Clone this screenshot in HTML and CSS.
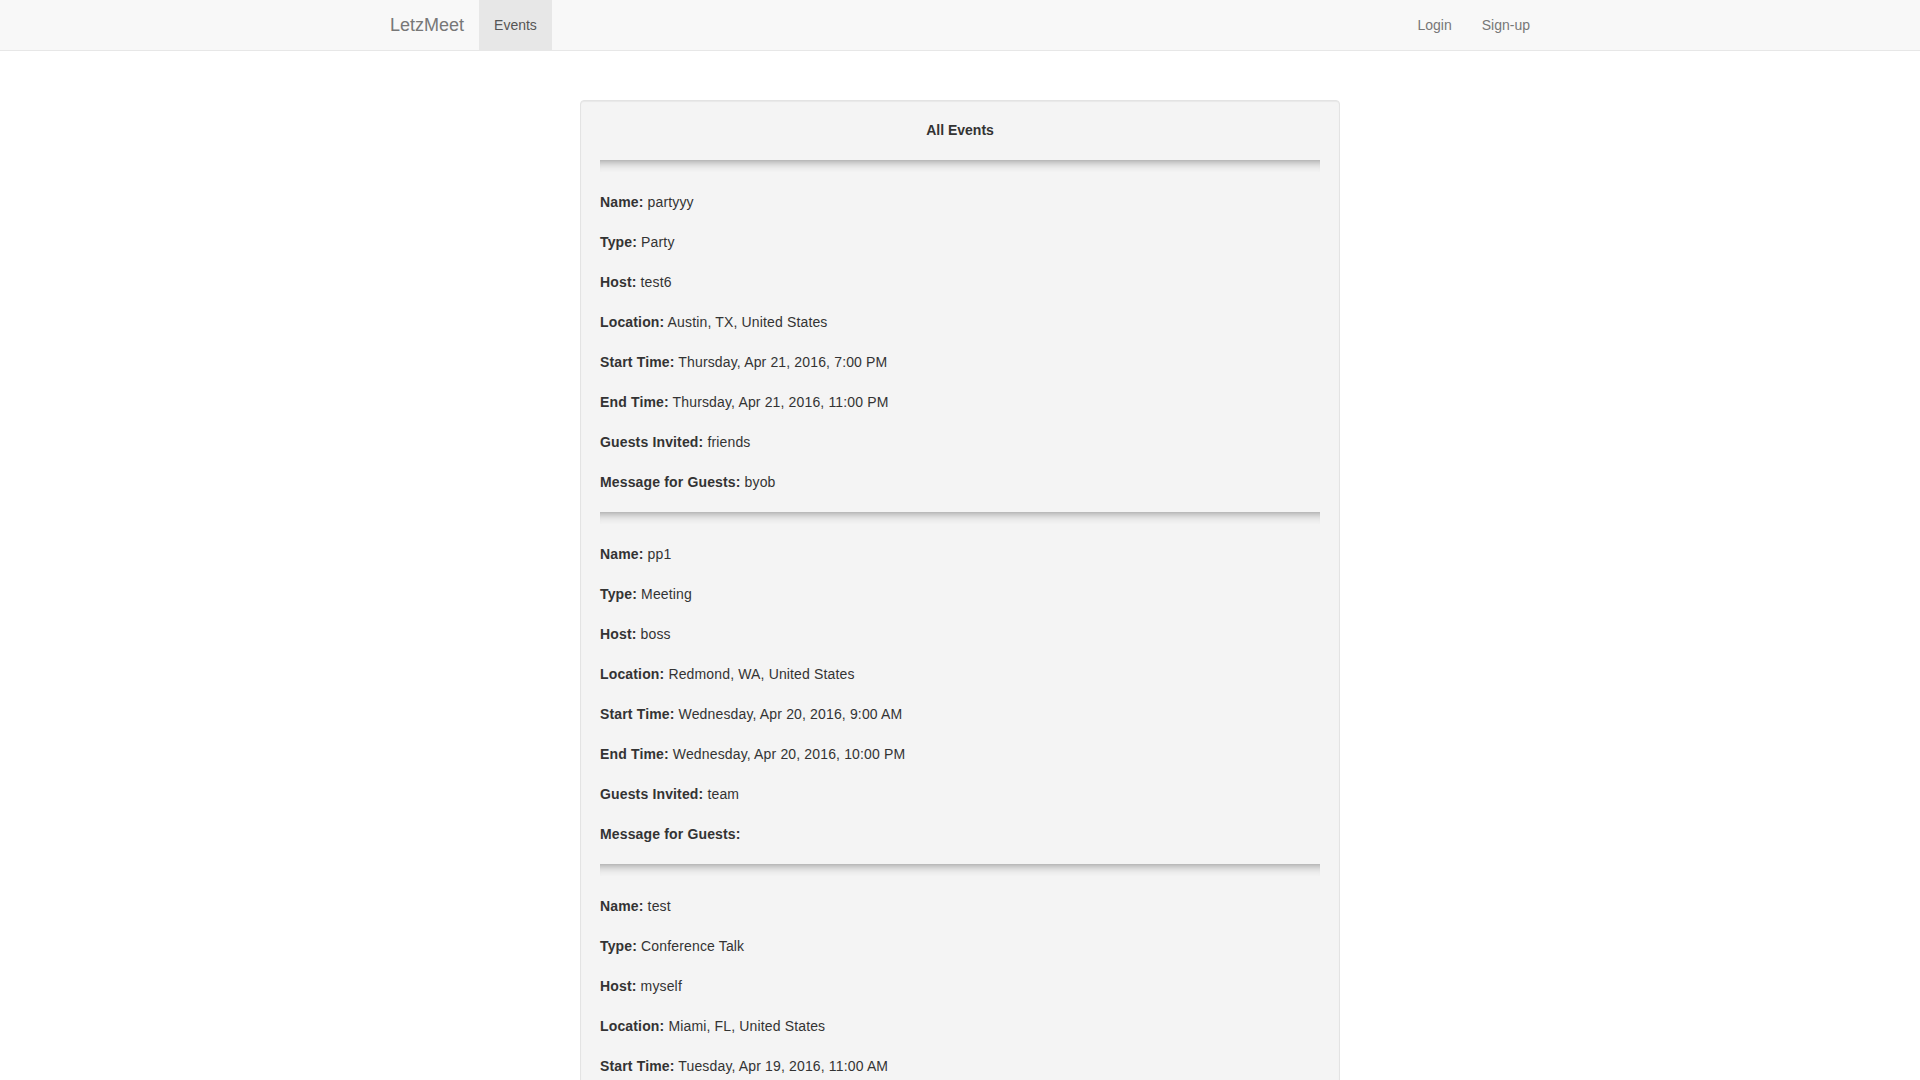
FILE: index.html
```html
<!DOCTYPE html>
<html lang="en">
<head>
<meta charset="utf-8">
<title>LetzMeet - Events</title>
<link rel="stylesheet" href="styles.css">
</head>
<body>
<nav class="navbar">
  <div class="container nav-inner">
    <div class="nav-left">
      <a class="brand" href="#">LetzMeet</a>
      <a class="nav-link active" href="#">Events</a>
    </div>
    <div class="nav-right">
      <a class="nav-link" href="#">Login</a>
      <a class="nav-link" href="#">Sign-up</a>
    </div>
  </div>
</nav>

<main class="main">
  <section class="well">
    <h5 class="title">All Events</h5>

    <hr class="divider">
    <p class="row"><b>Name:</b> partyyy</p>
    <p class="row"><b>Type:</b> Party</p>
    <p class="row"><b>Host:</b> test6</p>
    <p class="row"><b>Location:</b> Austin, TX, United States</p>
    <p class="row"><b>Start Time:</b> Thursday, Apr 21, 2016, 7:00 PM</p>
    <p class="row"><b>End Time:</b> Thursday, Apr 21, 2016, 11:00 PM</p>
    <p class="row"><b>Guests Invited:</b> friends</p>
    <p class="row"><b>Message for Guests:</b> byob</p>

    <hr class="divider">
    <p class="row"><b>Name:</b> pp1</p>
    <p class="row"><b>Type:</b> Meeting</p>
    <p class="row"><b>Host:</b> boss</p>
    <p class="row"><b>Location:</b> Redmond, WA, United States</p>
    <p class="row"><b>Start Time:</b> Wednesday, Apr 20, 2016, 9:00 AM</p>
    <p class="row"><b>End Time:</b> Wednesday, Apr 20, 2016, 10:00 PM</p>
    <p class="row"><b>Guests Invited:</b> team</p>
    <p class="row"><b>Message for Guests:</b> </p>

    <hr class="divider">
    <p class="row"><b>Name:</b> test</p>
    <p class="row"><b>Type:</b> Conference Talk</p>
    <p class="row"><b>Host:</b> myself</p>
    <p class="row"><b>Location:</b> Miami, FL, United States</p>
    <p class="row"><b>Start Time:</b> Tuesday, Apr 19, 2016, 11:00 AM</p>
  </section>
</main>
</body>
</html>
```

FILE: styles.css
```css
* { box-sizing: border-box; }

html, body {
  margin: 0;
  padding: 0;
}

body {
  font-family: "Liberation Sans", Arial, Helvetica, sans-serif;
  font-size: 14px;
  line-height: 20px;
  color: #333;
  background: #fff;
}

a { text-decoration: none; }

.navbar {
  background: #f8f8f8;
  border-bottom: 1px solid #e7e7e7;
  height: 51px;
}

.container {
  width: 1170px;
  margin: 0 auto;
}

.nav-inner {
  display: flex;
  justify-content: space-between;
  align-items: stretch;
  height: 50px;
}

.nav-left, .nav-right {
  display: flex;
  align-items: stretch;
}

.brand {
  display: block;
  padding: 15px 15px;
  font-size: 18px;
  line-height: 20px;
  color: #777;
}

.nav-link {
  display: block;
  padding: 15px 15px;
  font-size: 14px;
  line-height: 20px;
  color: #777;
}

.nav-link.active {
  background: #e7e7e7;
  color: #555;
}

.main {
  display: flex;
  justify-content: center;
  padding-top: 49px;
}

.well {
  width: 760px;
  padding: 19px;
  background: #f4f4f4;
  border: 1px solid #e3e3e3;
  border-radius: 4px;
  box-shadow: inset 0 1px 1px rgba(0, 0, 0, 0.05);
}

.title {
  margin: 0;
  font-size: 14px;
  line-height: 20px;
  font-weight: bold;
  text-align: center;
  color: #333;
}

.divider {
  border: 0;
  height: 12px;
  margin: 20px 0;
  box-shadow: inset 0 12px 12px -12px rgba(0, 0, 0, 0.5);
}

.row {
  margin: 0 0 20px;
  line-height: 20px;
  letter-spacing: 0.15px;
}

.row b {
  font-weight: bold;
}
```
